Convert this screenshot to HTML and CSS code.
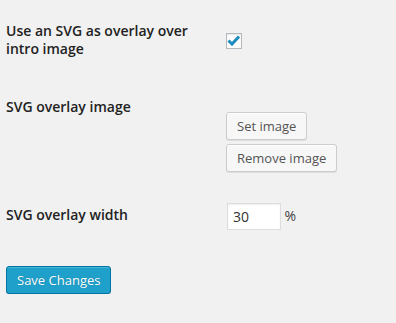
FILE: index.html
```html
<!DOCTYPE html>
<html lang="en">
<head>
    <meta charset="UTF-8">
    <title>SVG overlay settings</title>
    <link rel="stylesheet" href="styles.css">
</head>
<body>
    <form class="settings">
        <table class="form-table">
            <tr>
                <th>Use an SVG as overlay over intro image</th>
                <td class="row-check">
                    <span class="checkbox">
                        <svg width="16" height="16" viewBox="0 0 16 16">
                            <path d="M2.5 7.5 L6 11 L13 3.5" fill="none" stroke="#1e8cbe" stroke-width="3"/>
                        </svg>
                    </span>
                </td>
            </tr>
            <tr>
                <th>SVG overlay image</th>
                <td class="row-image">
                    <div class="image-actions">
                        <button type="button" class="button">Set image</button>
                        <button type="button" class="button">Remove image</button>
                    </div>
                </td>
            </tr>
            <tr>
                <th>SVG overlay width</th>
                <td class="row-width">
                    <input type="text" class="small-text" value="30"> <span class="unit">%</span>
                </td>
            </tr>
        </table>

        <p class="submit">
            <button type="button" class="button button-primary">Save Changes</button>
        </p>
    </form>
</body>
</html>
```

FILE: styles.css
```css
body {
    background-color: #f1f1f1;
    color: #444;
    font-family: "Open Sans", sans-serif;
    font-size: 13px;
    margin: 0;
}
.settings {
    padding: 2px 6px 0;
}
.form-table {
    border-collapse: collapse;
}
.form-table th {
    width: 200px;
    padding: 20px 10px 20px 0;
    text-align: left;
    vertical-align: top;
    font-size: 14px;
    font-weight: 600;
    line-height: 1.3;
    color: #222;
}
.form-table td {
    padding: 15px 10px;
    line-height: 1.3;
    vertical-align: middle;
}
.form-table td.row-image {
    vertical-align: top;
    padding: 34px 10px 14px;
}
.form-table td.row-width {
    vertical-align: top;
    padding-top: 17px;
}
.checkbox {
    display: block;
    width: 14px;
    height: 14px;
    border: 1px solid #b4b9be;
    background-color: #fff;
    box-shadow: inset 0 1px 2px rgba(0, 0, 0, 0.1);
    position: relative;
    top: 1px;
}
.checkbox svg {
    display: block;
    margin: -1px 0 0 -1px;
}
.image-actions {
    display: flex;
    flex-direction: column;
    align-items: flex-start;
    gap: 4px;
}
.button {
    font-family: "Open Sans", sans-serif;
    font-size: 13px;
    height: 28px;
    line-height: 26px;
    padding: 0 10px 1px;
    margin: 0;
    border: 1px solid #ccc;
    border-radius: 3px;
    background-color: #f7f7f7;
    color: #555;
    box-shadow: inset 0 1px 0 #fff, 0 1px 0 rgba(0, 0, 0, 0.08);
    cursor: pointer;
}
.button-primary {
    background-color: #1fa0ca;
    border-color: #0074a2;
    color: #fff;
    text-shadow: 0 0 1px rgba(0, 60, 90, 0.4);
    box-shadow: inset 0 1px 0 rgba(120, 200, 230, 0.5), 0 1px 0 rgba(0, 0, 0, 0.15);
}
.small-text {
    width: 54px;
    height: 27px;
    box-sizing: border-box;
    padding: 3px 5px;
    margin: 0 0 0 1px;
    border: 1px solid #ddd;
    background-color: #fff;
    box-shadow: inset 0 1px 2px rgba(0, 0, 0, 0.07);
    font-family: "Open Sans", sans-serif;
    font-size: 14px;
    color: #333;
    vertical-align: middle;
}
.unit {
    color: #444;
    font-size: 14px;
    vertical-align: middle;
}
.submit {
    margin: 21px 0 0;
}
```
